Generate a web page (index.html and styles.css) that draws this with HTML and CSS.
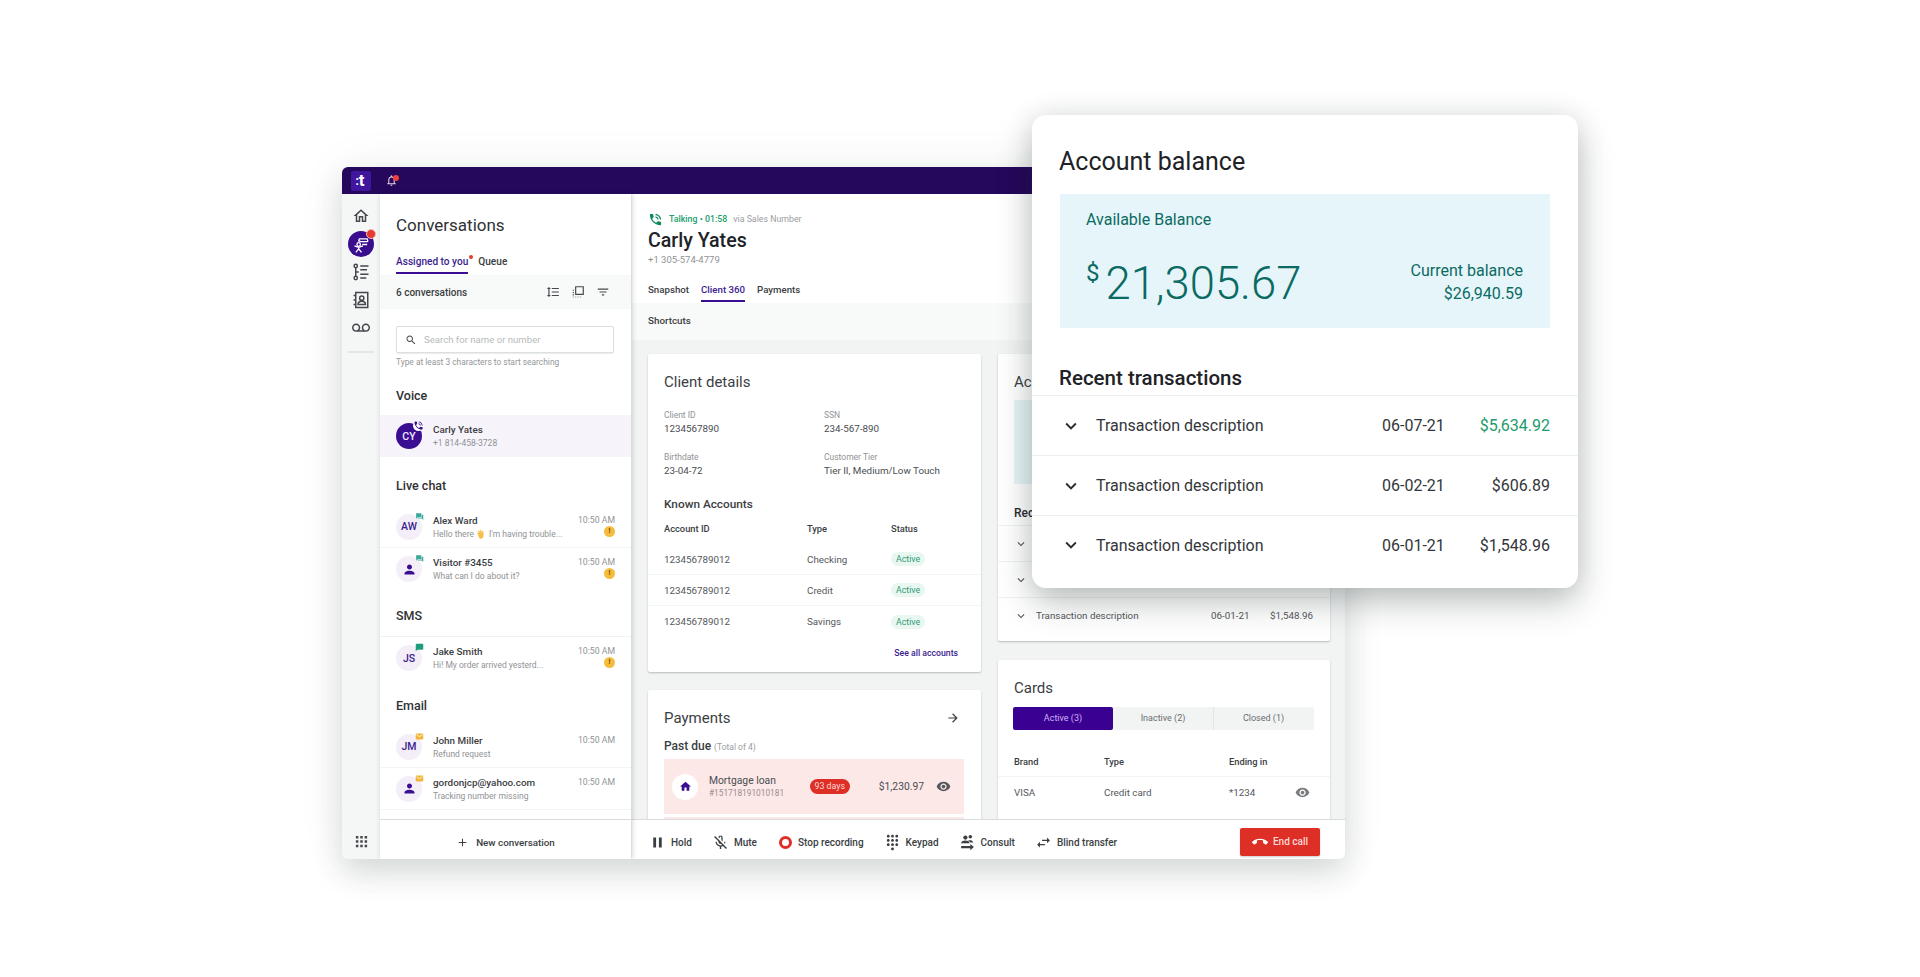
FILE: index.html
```html
<!DOCTYPE html>
<html lang="en">
<head>
<meta charset="utf-8">
<title>Client 360</title>
<link rel="stylesheet" href="styles.css">
</head>
<body>
<svg class="sprite" aria-hidden="true">
<symbol id="i-home" viewBox="0 0 24 24"><path d="M12 5.69l5 4.5V18h-2v-6H9v6H7v-7.81l5-4.5M12 3L2 12h3v8h6v-6h2v6h6v-8h3L12 3z"/></symbol>
<symbol id="i-homef" viewBox="0 0 24 24"><path d="M10 20v-6h4v6h5v-8h3L12 3 2 12h3v8z"/></symbol>
<symbol id="i-chev" viewBox="0 0 24 24"><path d="M16.59 8.59L12 13.17 7.41 8.59 6 10l6 6 6-6z"/></symbol>
<symbol id="i-arrow" viewBox="0 0 24 24"><path d="M12 4l-1.41 1.41L16.17 11H4v2h12.17l-5.58 5.59L12 20l8-8z"/></symbol>
<symbol id="i-eye" viewBox="0 0 24 24"><path d="M12 4.5C7 4.5 2.73 7.61 1 12c1.73 4.39 6 7.5 11 7.5s9.27-3.11 11-7.5c-1.73-4.39-6-7.5-11-7.5zM12 17c-2.76 0-5-2.24-5-5s2.24-5 5-5 5 2.24 5 5-2.24 5-5 5zm0-8c-1.66 0-3 1.34-3 3s1.34 3 3 3 3-1.34 3-3-1.34-3-3-3z"/></symbol>
<symbol id="i-pause" viewBox="0 0 24 24"><path d="M6 19h4V5H6v14zm8-14v14h4V5h-4z"/></symbol>
<symbol id="i-mute" viewBox="0 0 24 24"><path d="M10.8 4.900c0-.66.54-1.200 1.200-1.200s1.200.54 1.200 1.200l-.01 3.910L15 10.600V5c0-1.660-1.340-3-3-3-1.540 0-2.790 1.160-2.960 2.650l1.760 1.760V4.900zM19 11h-1.700c0 .58-.1 1.130-.27 1.640l1.270 1.270c.44-.88.7-1.870.7-2.910zM4.410 2.860L3 4.270l6 6V11c0 1.660 1.340 3 3 3 .23 0 .44-.03.65-.08l1.660 1.660c-.71.33-1.500.52-2.310.52-2.760 0-5.300-2.100-5.300-5.100H5c0 3.410 2.720 6.230 6 6.720V21h2v-3.280c.91-.13 1.770-.45 2.550-.9l4.200 4.200 1.410-1.410L4.410 2.860z"/></symbol>
<symbol id="i-dial" viewBox="0 0 24 24"><path d="M12 19c-1.100 0-2 .9-2 2s.9 2 2 2 2-.9 2-2-.9-2-2-2zM6 1c-1.100 0-2 .9-2 2s.9 2 2 2 2-.9 2-2-.9-2-2-2zm0 6c-1.100 0-2 .9-2 2s.9 2 2 2 2-.9 2-2-.9-2-2-2zm0 6c-1.100 0-2 .9-2 2s.9 2 2 2 2-.9 2-2-.9-2-2-2zm12-8c1.100 0 2-.9 2-2s-.9-2-2-2-2 .9-2 2 .9 2 2 2zm-6 8c-1.100 0-2 .9-2 2s.9 2 2 2 2-.9 2-2-.9-2-2-2zm6 0c-1.100 0-2 .9-2 2s.9 2 2 2 2-.9 2-2-.9-2-2-2zm0-6c-1.100 0-2 .9-2 2s.9 2 2 2 2-.9 2-2-.9-2-2-2zm-6 0c-1.100 0-2 .9-2 2s.9 2 2 2 2-.9 2-2-.9-2-2-2zm0-6c-1.100 0-2 .9-2 2s.9 2 2 2 2-.9 2-2-.9-2-2-2z"/></symbol>
<symbol id="i-end" viewBox="0 0 24 24"><path d="M12 9c-1.600 0-3.150.25-4.600.72v3.100c0 .39-.23.74-.56.9-.98.49-1.870 1.120-2.660 1.850-.18.18-.43.28-.7.28-.28 0-.53-.11-.71-.29L.29 13.080c-.18-.17-.29-.42-.29-.7 0-.28.11-.53.29-.71C3.340 8.780 7.460 7 12 7s8.660 1.780 11.710 4.670c.18.18.29.43.29.71 0 .28-.11.53-.29.71l-2.480 2.480c-.18.18-.43.29-.71.29-.27 0-.52-.11-.7-.28-.79-.74-1.690-1.360-2.670-1.850-.33-.16-.56-.5-.56-.9v-3.100C15.150 9.250 13.600 9 12 9z"/></symbol>
<symbol id="i-search" viewBox="0 0 24 24"><path d="M15.500 14h-.79l-.28-.27C15.410 12.590 16 11.110 16 9.500 16 5.910 13.090 3 9.500 3S3 5.910 3 9.500 5.910 16 9.500 16c1.610 0 3.090-.59 4.230-1.570l.27.28v.79l5 4.990L20.490 19l-4.990-5zm-6 0C7.010 14 5 11.990 5 9.500S7.010 5 9.500 5 14 7.010 14 9.500 11.990 14 9.500 14z"/></symbol>
<symbol id="i-filter" viewBox="0 0 24 24"><path d="M10 18h4v-2h-4v2zM3 6v2h18V6H3zm3 7h12v-2H6v2z"/></symbol>
<symbol id="i-person" viewBox="0 0 24 24"><path d="M12 12c2.210 0 4-1.790 4-4s-1.790-4-4-4-4 1.790-4 4 1.790 4 4 4zm0 2c-2.670 0-8 1.340-8 4v2h16v-2c0-2.660-5.330-4-8-4z"/></symbol>
<symbol id="i-consult" viewBox="0 0 24 24"><circle cx="9" cy="5" r="3"/><circle cx="16" cy="4" r="2.500"/><path d="M3 13c0-3 3.500-4 6-4s6 1 6 4zM13 9c2-.6 7-.4 7 3h-4c-.5-1.300-1.500-2.300-3-3z"/><path d="M3 17h13v-3l5 4.500-5 4.500v-3H3z"/></symbol>
<symbol id="i-add" viewBox="0 0 24 24"><path d="M19 13h-6v6h-2v-6H5v-2h6V5h2v6h6v2z"/></symbol>
<symbol id="i-vm" viewBox="0 0 24 24"><path d="M18.500 6C15.460 6 13 8.460 13 11.500c0 1.330.47 2.550 1.260 3.500H9.740c.79-.95 1.260-2.170 1.260-3.500C11 8.460 8.540 6 5.500 6S0 8.460 0 11.500 2.460 17 5.500 17h13c3.040 0 5.500-2.460 5.500-5.500S21.540 6 18.500 6zm-13 9C3.570 15 2 13.430 2 11.500S3.570 8 5.500 8 9 9.570 9 11.500 7.430 15 5.500 15zm13 0c-1.930 0-3.500-1.570-3.500-3.500S16.570 8 18.500 8 22 9.570 22 11.500 20.430 15 18.500 15z"/></symbol>
<symbol id="i-swap" viewBox="0 0 24 24"><path d="M6.990 11L3 15l3.990 4v-3H14v-2H6.990v-3zM21 9l-3.990-4v3H10v2h7.010v3L21 9z"/></symbol>
<symbol id="i-talk" viewBox="0 0 24 24"><path d="M20 15.500c-1.250 0-2.450-.2-3.570-.57-.35-.11-.74-.03-1.020.24l-2.200 2.200c-2.830-1.440-5.150-3.750-6.590-6.590l2.200-2.210c.28-.26.36-.65.25-1C8.700 6.450 8.500 5.250 8.500 4c0-.55-.45-1-1-1H4c-.55 0-1 .45-1 1 0 9.390 7.610 17 17 17 .55 0 1-.45 1-1v-3.500c0-.55-.45-1-1-1zM19 12h2c0-4.970-4.030-9-9-9v2c3.870 0 7 3.130 7 7zm-4 0h2c0-2.760-2.240-5-5-5v2c1.660 0 3 1.340 3 3z"/></symbol>
<symbol id="i-chat" viewBox="0 0 24 24"><path d="M3 3h13a1 1 0 0 1 1 1v9a1 1 0 0 1-1 1H7l-4 4z"/><path d="M19 7h2a1 1 0 0 1 1 1v13l-4-4H8a1 1 0 0 1-1-1v-1h11V7z"/></symbol>
<symbol id="i-sms" viewBox="0 0 24 24"><path d="M20 2H4c-1.100 0-2 .9-2 2v18l4-4h14c1.100 0 2-.9 2-2V4c0-1.100-.9-2-2-2z"/></symbol>
<symbol id="i-mail" viewBox="0 0 24 24"><path d="M20 4H4c-1.100 0-2 .9-2 2v12c0 1.100.9 2 2 2h16c1.100 0 2-.9 2-2V6c0-1.100-.9-2-2-2zm0 4l-8 5-8-5V6l8 5 8-5v2z"/></symbol>
<symbol id="i-sort" viewBox="0 0 24 24"><path d="M6 7h2.500L5 3.500 1.500 7H4v10H1.500L5 20.500 8.500 17H6V7zm4-2v2h12V5H10zm0 14h12v-2H10v2zm0-6h12v-2H10v2z"/></symbol>
<symbol id="i-select" viewBox="0 0 24 24"><path d="M8 3h13v13H8z" fill="none" stroke="currentColor" stroke-width="2"/><path d="M3 8h2v2H3zM3 12h2v2H3zM3 16h2v2H3zM3 20h2v1H3zM7 20h2v1H7zM11 20h2v1h-2zM15 20h2v1h-2z"/></symbol>
<symbol id="i-grid" viewBox="0 0 24 24"><path d="M3 3h4v4H3zM10 3h4v4h-4zM17 3h4v4h-4zM3 10h4v4H3zM10 10h4v4h-4zM17 10h4v4h-4zM3 17h4v4H3zM10 17h4v4h-4zM17 17h4v4h-4z"/></symbol>
<symbol id="i-tasks" viewBox="0 0 24 24" fill="none" stroke="currentColor" stroke-width="2"><circle cx="5" cy="4" r="2.200"/><circle cx="5" cy="20" r="2.200"/><path d="M5 6.500V17.500M5 12h4M11 4h11M11 9h9M11 15h11M11 20h8"/></symbol>
<symbol id="i-contact" viewBox="0 0 24 24" fill="none" stroke="currentColor" stroke-width="2"><path d="M5 2h16v20H5zM2 6h4M2 12h4M2 18h4"/><circle cx="13" cy="9.500" r="2.800"/><path d="M8 18c0-6 10-6 10 0z"/></symbol>
<symbol id="i-agent" viewBox="0 0 24 24" fill="none" stroke="currentColor" stroke-width="1.800"><circle cx="8" cy="12" r="2.500"/><path d="M8 15v3M2 14l6 2 6-2M4 23l4-5 4 5"/><path d="M8 7l1-3h11l1 3-1 1H11zM13 12h7"/></symbol>
<symbol id="i-bell" viewBox="0 0 24 24"><path d="M12 22a2 2 0 0 0 2-2h-4a2 2 0 0 0 2 2zm6-6v-5c0-3.100-1.600-5.600-4.500-6.300V4a1.500 1.500 0 0 0-3 0v.7C7.600 5.400 6 7.900 6 11v5l-2 2v1h16v-1l-2-2zm-2 1H8v-6c0-2.500 1.500-4.500 4-4.500s4 2 4 4.500v6z"/></symbol>
<symbol id="i-wave" viewBox="0 0 24 24"><path d="M5 13l-2-3c-1-2 1-3 2-1.500L7 11 4.500 5.500C3.700 3.500 6 2.700 7 4.500L9.500 9 8.500 3.500c-.3-2 2.200-2.500 3-.5l1.500 5.500.3-3.500c.2-2 2.700-1.800 2.700.2l.5 8c.2 4-2 8-6 8-3 0-4.500-2-5.500-8z"/></symbol>
</svg>

<main class="stage">
  <section class="app">
    <header class="topbar">
      <div class="logo"><span class="logo-dots">:</span>t</div>
      <span class="bell"><svg class="ic ic-bell"><use href="#i-bell"/></svg><i class="bell-dot"></i></span>
    </header>
    <div class="app-body">
      <nav class="rail">
        <svg class="ic rail-ic"><use href="#i-home"/></svg>
        <span class="rail-active"><svg class="ic ic-agent"><use href="#i-agent"/></svg><i class="rail-badge"></i></span>
        <svg class="ic rail-ic"><use href="#i-tasks"/></svg>
        <svg class="ic rail-ic"><use href="#i-contact"/></svg>
        <svg class="ic rail-ic"><use href="#i-vm"/></svg>
        <hr class="rail-div">
        <svg class="ic rail-grid"><use href="#i-grid"/></svg>
      </nav>

      <aside class="conv">
        <div class="conv-scroll">
          <h1 class="conv-title">Conversations</h1>
          <div class="conv-tabs">
            <span class="conv-tab is-on">Assigned to you<i class="tab-dot"></i></span>
            <span class="conv-tab">Queue</span>
          </div>
          <div class="conv-tools">
            <span class="conv-count">6 conversations</span>
            <svg class="ic tool-ic"><use href="#i-sort"/></svg>
            <svg class="ic tool-ic"><use href="#i-select"/></svg>
            <svg class="ic tool-ic"><use href="#i-filter"/></svg>
          </div>
          <div class="search"><svg class="ic search-ic"><use href="#i-search"/></svg><span>Search for name or number</span></div>
          <p class="hint">Type at least 3 characters to start searching</p>

          <h2 class="group group-first">Voice</h2>
          <div class="row row-active">
            <span class="avatar avatar-dark">CY<svg class="ic status status-call"><use href="#i-talk"/></svg></span>
            <div class="row-main"><b>Carly Yates</b><small>+1 814-458-3728</small></div>
          </div>

          <h2 class="group group-live">Live chat</h2>
          <div class="row row-line">
            <span class="avatar">AW<svg class="ic status status-chat"><use href="#i-chat"/></svg></span>
            <div class="row-main"><b>Alex Ward</b><small>Hello there <svg class="ic wave"><use href="#i-wave"/></svg> I'm having trouble...</small></div>
            <div class="row-meta"><time>10:50 AM</time><i class="unread">!</i></div>
          </div>
          <div class="row">
            <span class="avatar"><svg class="ic av-person"><use href="#i-person"/></svg><svg class="ic status status-chat"><use href="#i-chat"/></svg></span>
            <div class="row-main"><b>Visitor #3455</b><small>What can I do about it?</small></div>
            <div class="row-meta"><time>10:50 AM</time><i class="unread">!</i></div>
          </div>

          <h2 class="group group-line">SMS</h2>
          <div class="row">
            <span class="avatar">JS<svg class="ic status status-sms"><use href="#i-sms"/></svg></span>
            <div class="row-main"><b>Jake Smith</b><small>Hi! My order arrived yesterd...</small></div>
            <div class="row-meta"><time>10:50 AM</time><i class="unread">!</i></div>
          </div>

          <h2 class="group group-email">Email</h2>
          <div class="row row-line">
            <span class="avatar">JM<svg class="ic status status-mail"><use href="#i-mail"/></svg></span>
            <div class="row-main"><b>John Miller</b><small>Refund request</small></div>
            <div class="row-meta"><time>10:50 AM</time></div>
          </div>
          <div class="row row-line">
            <span class="avatar"><svg class="ic av-person"><use href="#i-person"/></svg><svg class="ic status status-mail"><use href="#i-mail"/></svg></span>
            <div class="row-main"><b>gordonjcp@yahoo.com</b><small>Tracking number missing</small></div>
            <div class="row-meta"><time>10:50 AM</time></div>
          </div>
        </div>
        <button class="new-conv"><svg class="ic new-ic"><use href="#i-add"/></svg>New conversation</button>
      </aside>

      <div class="main">
        <div class="main-scroll">
          <header class="client-head">
            <div class="call-state">
              <svg class="ic call-ic"><use href="#i-talk"/></svg>
              <span class="talking">Talking • 01:58</span>
              <span class="via">via Sales Number</span>
            </div>
            <h1 class="client-name">Carly Yates</h1>
            <p class="client-phone">+1 305-574-4779</p>
            <div class="client-tabs">
              <span class="client-tab">Snapshot</span>
              <span class="client-tab is-on">Client 360</span>
              <span class="client-tab">Payments</span>
            </div>
          </header>
          <div class="shortcuts">Shortcuts</div>

          <div class="columns">
            <div class="col">
              <section class="card card-client">
                <h2 class="card-title">Client details</h2>
                <dl class="facts">
                  <div><dt>Client ID</dt><dd>1234567890</dd></div>
                  <div><dt>SSN</dt><dd>234-567-890</dd></div>
                  <div><dt>Birthdate</dt><dd>23-04-72</dd></div>
                  <div><dt>Customer Tier</dt><dd>Tier II, Medium/Low Touch</dd></div>
                </dl>
                <h3 class="known">Known Accounts</h3>
                <div class="acct acct-head"><span>Account ID</span><span>Type</span><span>Status</span></div>
                <div class="acct acct-line"><span>123456789012</span><span>Checking</span><span><em class="pill">Active</em></span></div>
                <div class="acct acct-line"><span>123456789012</span><span>Credit</span><span><em class="pill">Active</em></span></div>
                <div class="acct"><span>123456789012</span><span>Savings</span><span><em class="pill">Active</em></span></div>
                <a class="see-all">See all accounts</a>
              </section>

              <section class="card card-pay">
                <div class="pay-head"><h2 class="card-title">Payments</h2><svg class="ic pay-arrow"><use href="#i-arrow"/></svg></div>
                <h3 class="past">Past due <small>(Total of 4)</small></h3>
                <div class="loan">
                  <span class="loan-ic"><svg class="ic loan-home"><use href="#i-homef"/></svg></span>
                  <div class="loan-main"><b>Mortgage loan</b><small>#151718191010181</small></div>
                  <span class="days">93 days</span>
                  <span class="loan-amt">$1,230.97</span>
                  <svg class="ic eye"><use href="#i-eye"/></svg>
                </div>
                <div class="loan"></div>
              </section>
            </div>

            <div class="col col-right">
              <section class="card card-acct">
                <h2 class="card-title">Ac</h2>
                <div class="mini-bal"></div>
                <h3 class="mini-rec">Rec</h3>
                <div class="mini-tx"><svg class="ic mini-chev"><use href="#i-chev"/></svg></div>
                <div class="mini-tx"><svg class="ic mini-chev"><use href="#i-chev"/></svg></div>
                <div class="mini-tx"><svg class="ic mini-chev"><use href="#i-chev"/></svg><span class="tx-d">Transaction description</span><span class="tx-dt">06-01-21</span><span class="tx-a">$1,548.96</span></div>
              </section>

              <section class="card card-cards">
                <h2 class="card-title">Cards</h2>
                <div class="seg"><span class="seg-on">Active (3)</span><span>Inactive (2)</span><span>Closed (1)</span></div>
                <div class="cc cc-head"><span>Brand</span><span>Type</span><span>Ending in</span></div>
                <div class="cc"><span>VISA</span><span>Credit card</span><span>*1234</span><svg class="ic eye eye-cc"><use href="#i-eye"/></svg></div>
              </section>
            </div>
          </div>
        </div>

        <footer class="callbar">
          <button class="act"><svg class="ic act-ic"><use href="#i-pause"/></svg>Hold</button>
          <button class="act"><svg class="ic act-ic"><use href="#i-mute"/></svg>Mute</button>
          <button class="act act-rec"><span class="rec"></span>Stop recording</button>
          <button class="act"><svg class="ic act-ic"><use href="#i-dial"/></svg>Keypad</button>
          <button class="act"><svg class="ic act-ic"><use href="#i-consult"/></svg>Consult</button>
          <button class="act"><svg class="ic act-ic"><use href="#i-swap"/></svg>Blind transfer</button>
          <button class="end"><svg class="ic end-ic"><use href="#i-end"/></svg>End call</button>
        </footer>
      </div>
    </div>
  </section>

  <section class="balance">
    <h1 class="bal-title">Account balance</h1>
    <div class="bal-box">
      <p class="bal-label">Available Balance</p>
      <div class="bal-line">
        <div class="bal-amt"><sup>$</sup>21,305.67</div>
        <div class="bal-cur"><span>Current balance</span><span>$26,940.59</span></div>
      </div>
    </div>
    <h2 class="bal-rec">Recent transactions</h2>
    <div class="tx"><svg class="ic tx-chev"><use href="#i-chev"/></svg><span class="t-desc">Transaction description</span><span class="t-date">06-07-21</span><span class="t-amt t-pos">$5,634.92</span></div>
    <div class="tx"><svg class="ic tx-chev"><use href="#i-chev"/></svg><span class="t-desc">Transaction description</span><span class="t-date">06-02-21</span><span class="t-amt">$606.89</span></div>
    <div class="tx tx-last"><svg class="ic tx-chev"><use href="#i-chev"/></svg><span class="t-desc">Transaction description</span><span class="t-date">06-01-21</span><span class="t-amt">$1,548.96</span></div>
  </section>
</main>
</body>
</html>
```

FILE: styles.css
```css
* { box-sizing: border-box; }
html, body { margin: 0; padding: 0; background: #fff; }
body { font-family: Roboto, "Liberation Sans", sans-serif; color: #2b2d30; overflow: hidden; }
h1, h2, h3, p, dl, dd { margin: 0; font-weight: 400; }
button { font: inherit; border: 0; background: none; padding: 0; color: inherit; }
small { font-size: inherit; font-weight: 400; }
em { font-style: normal; }
.sprite { width: 0; height: 0; position: absolute; }
.ic { display: block; fill: currentColor; flex: none; }

.stage { position: relative; width: 1920px; height: 977px; overflow: hidden; }

/* application window */
.app {
  position: absolute; left: 342px; top: 167px; width: 1003px; height: 692px;
  display: flex; flex-direction: column; background: #f5f7f7; border-radius: 6px;
  box-shadow: 0 14px 30px rgba(40, 50, 50, .16), 0 0 50px rgba(40, 50, 50, .06);
  overflow: hidden;
}
.topbar { height: 27px; flex: none; background: #25075c; display: flex; align-items: center; padding-left: 9px; gap: 14px; }
.logo { width: 20px; height: 20px; background: #40169e; color: #fff; font-size: 17px; font-weight: 700; line-height: 19px; text-align: center; text-indent: -2px; border-radius: 2px; }
.logo-dots { font-size: 12px; vertical-align: 1px; }
.bell { position: relative; display: block; color: #e4cbe8; }
.ic-bell { width: 13px; height: 13px; }
.bell-dot { position: absolute; right: -1px; top: 1px; width: 6px; height: 6px; border-radius: 50%; background: #ef4136; }
.app-body { flex: 1; display: flex; min-height: 0; }

.rail { width: 38px; flex: none; background: #f5f7f7; display: flex; flex-direction: column; align-items: center; padding-top: 13px; position: relative; }
.rail-ic { width: 18px; height: 18px; color: #45484c; margin-bottom: 10px; }
.rail-active { display: flex; align-items: center; justify-content: center; width: 26px; height: 26px; border-radius: 50%; background: #3a0d8f; color: #fff; position: relative; margin: -4px 0 6px; }
.ic-agent { width: 17px; height: 17px; fill: none; }
.rail-badge { position: absolute; right: -2px; top: -2px; width: 10px; height: 10px; border-radius: 50%; background: #e53a30; border: 1px solid #f5b5b0; }
.rail-div { width: 26px; height: 2px; border: 0; background: #e3e6e6; margin: 4px 0 0; }
.rail-grid { position: absolute; left: 12px; bottom: 10px; width: 15px; height: 15px; color: #45484c; }

/* conversations */
.conv { width: 251px; margin-right: 1px; flex: none; background: #fff; display: flex; flex-direction: column; box-shadow: 1px 0 5px rgba(30, 40, 40, .22); position: relative; z-index: 2; }
.conv-scroll { flex: 1; min-height: 0; overflow: hidden; border-bottom: 1px solid #d9dcdc; }
.conv-title { font-size: 17px; line-height: 22px; margin: 20px 0 0 16px; color: #2f3134; }
.conv-tabs { display: flex; gap: 10px; margin: 14px 0 0 16px; height: 24px; }
.conv-tab { font-size: 10.100px; font-weight: 500; line-height: 23px; color: #3b3e42; position: relative; }
.conv-tab.is-on { color: #3b1d8f; border-bottom: 2px solid #3b0d91; height: 24px; }
.tab-dot { position: absolute; right: -5px; top: 5px; width: 4px; height: 4px; border-radius: 50%; background: #e53a30; }
.conv-tools { height: 34px; background: #f8f9f9; display: flex; align-items: center; padding: 0 21px 0 16px; margin-top: 1px; color: #45484c; }
.conv-count { font-size: 10px; font-weight: 500; flex: 1; color: #3b3e42; }
.tool-ic { width: 14px; height: 14px; margin-left: 11px; }
.search { margin: 17px 17px 0 16px; height: 27px; border: 1px solid #dcdfdf; border-radius: 2px; display: flex; align-items: center; padding-left: 8px; gap: 7px; font-size: 9.600px; color: #b7babb; box-shadow: 0 1px 1px rgba(0, 0, 0, .08); }
.search-ic { width: 12px; height: 12px; color: #45484c; }
.hint { font-size: 8.400px; color: #93979a; line-height: 12px; margin: 3px 0 0 16px; }
.group { font-size: 12.500px; font-weight: 500; line-height: 20px; height: 20px; margin: 16px 0 10px 16px; color: #2f3134; }
.group-first { margin-top: 18px; margin-bottom: 9px; }
.group-live { margin-top: 19px; }
.group-line { margin-bottom: 0; height: 31px; margin-left: 0; padding-left: 16px; border-bottom: 1px solid #f0f1f1; }
.group-email { margin-top: 17px; }
.row { height: 42px; display: flex; align-items: center; padding: 0 16px; gap: 11px; }
.row-line { border-bottom: 1px solid #f3f4f4; }
.row-active { background: #f7f3fb; }
.avatar { width: 26px; height: 26px; border-radius: 50%; background: #f3eef8; color: #3b1d8f; font-size: 10.500px; font-weight: 500; display: flex; align-items: center; justify-content: center; position: relative; flex: none; }
.avatar-dark { background: #3b0d91; color: #f1eaff; }
.av-person { width: 15px; height: 15px; color: #3b0d91; }
.status { position: absolute; right: -2px; top: -2px; width: 9px; height: 9px; }
.status-call { color: #3b0d91; background: #fff; border-radius: 50%; width: 11px; height: 11px; right: -2px; top: -3px; }
.status-chat { color: #3aa99a; }
.status-sms { color: #1f9d7a; }
.status-mail { color: #f1b53a; }
.row-main { flex: 1; min-width: 0; display: flex; flex-direction: column; gap: 2px; }
.row-main b { font-size: 9.900px; font-weight: 500; line-height: 13px; color: #3b3e42; }
.row-main small { font-size: 8.500px; line-height: 11px; color: #8f9396; white-space: nowrap; display: flex; align-items: center; gap: 2px; }
.wave { width: 11px; height: 11px; color: #f7bd45; }
.row-meta { display: flex; flex-direction: column; align-items: flex-end; gap: 0; align-self: flex-start; padding-top: 9px; }
.row-meta time { font-size: 8.700px; line-height: 11px; color: #8f9396; }
.unread { width: 11px; height: 11px; border-radius: 50%; background: #f6bd3c; color: #6b4b00; font-size: 7px; font-weight: 700; font-style: normal; text-align: center; line-height: 11px; }
.new-conv { height: 39px; flex: none; display: flex; align-items: center; justify-content: center; gap: 7px; padding-top: 5px; font-size: 9.800px; font-weight: 500; color: #3b3e42; background: #fff; }
.new-ic { width: 13px; height: 13px; }

/* client area */
.main { flex: 1; min-width: 0; display: flex; flex-direction: column; }
.main-scroll { flex: 1; min-height: 0; overflow: hidden; background: #f2f4f4; border-bottom: 1px solid #d9dcdc; }
.client-head { height: 109px; background: #fff; padding: 17px 16px 0; }
.call-state { display: flex; align-items: center; height: 16px; font-size: 8.800px; }
.call-ic { width: 15px; height: 15px; color: #0f8a5f; margin-right: 6px; }
.talking { color: #22a06e; font-weight: 500; margin-right: 6px; }
.via { color: #9a9ea1; }
.client-name { font-size: 19.600px; font-weight: 500; line-height: 24px; color: #202226; margin-top: 2px; }
.client-phone { font-size: 9.500px; line-height: 14px; color: #8f9396; }
.client-tabs { display: flex; gap: 12px; margin-top: 15px; }
.client-tab { font-size: 9.700px; font-weight: 500; line-height: 16px; height: 20px; color: #3b3e42; }
.client-tab.is-on { color: #3b1d8f; border-bottom: 2px solid #3b0d91; }
.shortcuts { height: 37px; padding: 10px 16px 0; font-size: 9.800px; font-weight: 500; line-height: 16px; color: #3b3e42; background: #f8f9f9; }
.columns { display: flex; gap: 17px; padding: 14px 15px 0 16px; align-items: flex-start; }
.col { width: 333px; display: flex; flex-direction: column; gap: 18px; }
.col-right { width: 332px; gap: 19px; }
.card { background: #fff; border-radius: 2px; box-shadow: 0 1px 2px rgba(30, 40, 40, .28); padding: 0 16px; }
.card-title { font-size: 15px; line-height: 20px; color: #3b3e42; padding-top: 18px; }

.card-client { height: 318px; }
.facts { display: grid; grid-template-columns: 160px 1fr; row-gap: 15px; margin-top: 17px; }
.facts dt { font-size: 8.500px; line-height: 12px; color: #8f9396; }
.facts dd { font-size: 9.800px; line-height: 15px; color: #4a4d51; }
.known { font-size: 11.800px; font-weight: 500; line-height: 16px; color: #3b3e42; margin-top: 18px; }
.acct { display: grid; grid-template-columns: 143px 84px 1fr; height: 31px; align-items: center; font-size: 9.800px; color: #55585c; margin: 0 -16px; padding: 0 16px; }
.acct-head { margin-top: 1px; font-size: 9.300px; font-weight: 500; color: #3b3e42; }
.acct-line { border-bottom: 1px solid #f3f4f4; }
.pill { display: inline-block; background: #e9f7f0; color: #2e9b73; font-size: 8.800px; padding: 0 5px; border-radius: 7px; line-height: 14px; }
.see-all { display: block; text-align: right; font-size: 8.700px; font-weight: 500; color: #3b1d8f; margin: 9px 7px 0 0; line-height: 14px; }

.card-pay { height: 300px; }
.pay-head { display: flex; justify-content: space-between; align-items: flex-end; }
.pay-arrow { width: 14px; height: 14px; margin: 0 5px 3px 0; color: #3b3e42; }
.past { font-size: 12px; font-weight: 500; line-height: 18px; margin-top: 9px; color: #3b3e42; }
.past small { font-size: 8.500px; color: #9a9ea1; }
.loan { width: 300px; height: 55px; background: #fde8e8; margin: 3px 0 0 0; display: flex; align-items: center; padding: 0 13px 0 8px; }
.loan-ic { width: 26px; height: 26px; border-radius: 50%; background: #fff; display: flex; align-items: center; justify-content: center; color: #3b0d91; flex: none; }
.loan-home { width: 13px; height: 13px; }
.loan-main { width: 104px; margin-left: 11px; display: flex; flex-direction: column; gap: 1px; }
.loan-main b { font-size: 10.300px; font-weight: 400; line-height: 13px; color: #4a4d51; }
.loan-main small { font-size: 8.300px; line-height: 11px; color: #9a8e8e; }
.days { background: #dd2f25; color: #ffd9d6; font-size: 8.800px; line-height: 15px; width: 40px; text-align: center; border-radius: 8px; flex: none; }
.loan-amt { font-size: 10.300px; color: #4a4d51; margin-left: 29px; }
.eye { width: 15px; height: 15px; color: #55585c; }
.loan .eye { margin-left: 12px; }

.card-acct { height: 287px; }
.mini-bal { height: 84px; margin-top: 8px; background: #e6f5f6; }
.mini-rec { font-size: 12px; font-weight: 500; line-height: 16px; margin: 21px 0 4px; }
.mini-tx { height: 36px; margin: 0 -16px; padding: 0 17px 0 16px; display: flex; align-items: center; font-size: 9.800px; color: #55585c; border-top: 1px solid #f0f1f1; white-space: nowrap; }
.mini-chev { width: 14px; height: 14px; margin-right: 8px; }
.tx-d { flex: 1; }
.tx-dt { width: 52px; }
.tx-a { width: 50px; text-align: right; }

.card-cards { height: 300px; }
.seg { display: grid; grid-template-columns: repeat(3, 100px); height: 23px; margin-top: 9px; margin-left: -1px; font-size: 9px; line-height: 23px; text-align: center; color: #6a6d70; background: #f2f4f4; border-radius: 2px; }
.seg span + span + span { border-left: 1px solid #e3e6e6; }
.seg-on { background: #3a0092; color: #cdb4f7; border-radius: 2px; }
.cc { display: grid; grid-template-columns: 90px 125px 1fr 16px; height: 31px; align-items: center; font-size: 9.800px; color: #55585c; margin: 0 -16px; padding: 0 19px 0 16px; }
.cc-head { margin-top: 16px; font-size: 9.300px; font-weight: 500; color: #3b3e42; border-bottom: 1px solid #f3f4f4; }
.eye-cc { color: #7a7d80; }

/* call bar */
.callbar { height: 39px; flex: none; background: #fff; display: flex; align-items: center; padding: 5px 25px 0 17px; font-size: 10px; font-weight: 500; color: #3b3e42; }
.act { display: flex; align-items: center; gap: 5px; white-space: nowrap; }
.act + .act { margin-left: 20px; }
.act-ic { width: 17px; height: 17px; }
.rec { width: 13px; height: 13px; border-radius: 50%; border: 3.500px solid #dd2f25; background: #fff; display: block; }
.act-rec { gap: 6px; }
.act + .act-rec { margin-left: 22px; }
.end { margin-left: auto; width: 80px; height: 28px; margin-top: -1px; background: #dd2f25; color: #ffd9d6; border-radius: 2px; display: flex; align-items: center; justify-content: center; gap: 5px; font-size: 10px; font-weight: 500; box-shadow: 0 1px 2px rgba(0,0,0,.2); }
.end-ic { width: 16px; height: 16px; color: #fff; }

/* floating balance card */
.balance { position: absolute; left: 1032px; top: 115px; width: 546px; height: 473px; background: #fff; border-radius: 14px; box-shadow: 0 14px 34px rgba(30, 40, 40, .28), 0 0 30px rgba(30, 40, 40, .08); padding-top: 31px; z-index: 5; }
.bal-title { font-size: 25px; line-height: 32px; margin-left: 27px; color: #202226; }
.bal-box { margin: 16px 28px 0; height: 134px; background: #e6f5fa; padding: 16px 27px 0 26px; color: #0b6b62; }
.bal-label { font-size: 16px; line-height: 20px; }
.bal-line { display: flex; justify-content: space-between; margin-top: 27px; }
.bal-amt { font-size: 45.400px; font-weight: 300; line-height: 54px; }
.bal-amt sup { font-size: 24px; line-height: 0; font-weight: 400; vertical-align: 18px; margin-right: 6px; }
.bal-cur { display: flex; flex-direction: column; align-items: flex-end; font-size: 16px; line-height: 23px; padding-top: 2px; }
.bal-rec { font-size: 20.500px; font-weight: 500; line-height: 26px; margin: 37px 0 0 27px; color: #202226; height: 30px; }
.tx { height: 60px; border-top: 1px solid #eef0f0; display: flex; align-items: center; font-size: 16px; color: #33363a; padding: 0 28px; }
.tx-last { height: 59px; }
.tx-chev { width: 22px; height: 22px; margin: 0 14px 0 0; color: #2b2d30; }
.t-desc { flex: 1; }
.t-date { width: 96px; }
.t-amt { width: 72px; text-align: right; white-space: nowrap; }
.t-pos { color: #1e9b6a; }
```
